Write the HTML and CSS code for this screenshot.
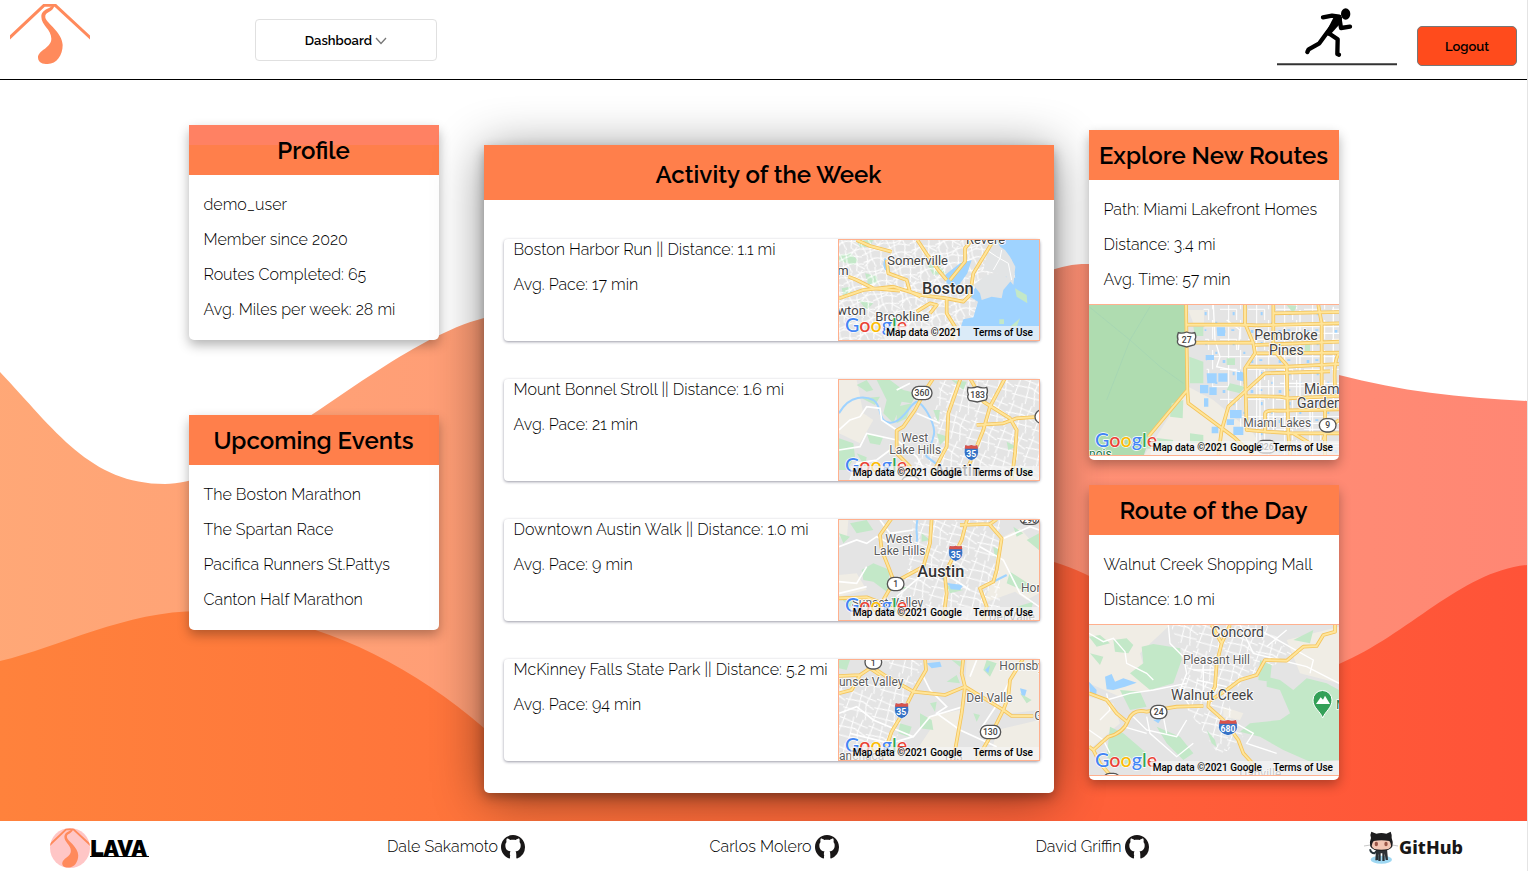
FILE: index.html
```html
<!DOCTYPE html>
<html lang="en">
<head>
<meta charset="utf-8">
<title>Lava</title>
<link rel="stylesheet" href="styles.css">
</head>
<body>
<svg class="defs" aria-hidden="true">
  <defs>
    <symbol id="volcano" viewBox="30 12 240 180">
      <path d="M26 116 132 16H166L274 116" fill="none" stroke="#ff8a5c" stroke-width="9"/>
      <path d="M160 12C156 27 125 24 124 50C124 76 154 87 154 116C154 144 114 150 114 173C115 188 128 192 143 192C170 192 188 166 188 135C187 96 140 70 136 53C133 34 158 40 164 16Z" fill="#ff8a5c"/>
    </symbol>
    <symbol id="mark" viewBox="0 0 16 16">
      <path fill="#191717" d="M8 0C3.58 0 0 3.58 0 8c0 3.54 2.29 6.53 5.47 7.59.4.07.55-.17.55-.38 0-.19-.01-.82-.01-1.490-.2-.9-.1-2.200.3-2.900-1.800-.2-3.400-1.200-3.400-3.900 0-.9.300-1.600.8-2.200-.1-.3-.3-1.200.1-2.300.6-.1 1.500.3 2.400.9.8-.2 2.500-.2 3.600 0 1-.6 1.800-1 2.400-.9.400 1.100.2 2 .1 2.300.5.6.8 1.300.8 2.200 0 2.700-1.600 3.700-3.400 3.900.4.700.5 1.500.5 2.900 0 .6-.01 1.100-.01 1.490 0 .21.15.46.55.38A8.010 8.010 0 0 0 16 8c0-4.420-3.580-8-8-8z"/>
      <path d="M3 11.700Q3.900 12 4.300 12.900 4.900 13.800 6.100 13.500" fill="none" stroke="#191717" stroke-width=".8"/>
    </symbol>
    <pattern id="streets" width="90" height="84" patternUnits="userSpaceOnUse" patternTransform="rotate(18)">
      <path class="lane" d="M0 12 90 20M0 40 52 33 90 46M0 66 90 60M14 0 8 84M40 0 48 84M70 0 64 40 76 84"/>
    </pattern>
    <pattern id="dense" width="74" height="70" patternUnits="userSpaceOnUse" patternTransform="rotate(-14)">
      <path class="lane" d="M0 8 30 14 74 6M0 28 40 20 74 32M0 50 36 44 74 54M8 0 16 34 6 70M30 0 26 38 34 70M52 0 60 26 48 70M0 62 26 44M40 20 66 0M52 50 74 70"/>
    </pattern>
    <pattern id="blocks" width="84" height="90" patternUnits="userSpaceOnUse">
      <path class="lane" d="M0 20H84M0 58H50M26 0V90M62 0V58M50 58V90"/>
      <path fill="#9fd3ff" d="M8 30h8v9h-8zM38 66h6v10h-6zM70 5h6v7h-6zM34 28h9v5h-9z"/>
    </pattern>
    <symbol id="interstate" viewBox="0 0 48 50" preserveAspectRatio="none">
      <path d="M6 2Q14 6 24 2 34 6 42 2 50 28 40 39 33 47 24 49 15 47 8 39-2 28 6 2Z" fill="#3572c6" stroke="#fff" stroke-width="2"/>
      <path d="M6 2Q14 6 24 2 34 6 42 2L44 13H4Z" fill="#d9534a"/>
    </symbol>
    <g id="legal">
      <g class="google"><text x="45" y="305"><tspan fill="#4285f4">G</tspan><tspan fill="#ea4335">o</tspan><tspan fill="#fbbc05">o</tspan><tspan fill="#4285f4">g</tspan><tspan fill="#34a853">l</tspan><tspan fill="#ea4335">e</tspan></text></g>
    </g>
  </defs>
</svg>

<div class="page">
  <header class="topbar">
    <a class="home" href="#" aria-label="Lava home"><svg width="80" height="60"><use href="#volcano"/></svg></a>
    <button class="menu" type="button">Dashboard
      <svg width="12" height="8" viewBox="0 0 12 8"><path d="M1 1 6 6.500 11 1" fill="none" stroke="#777" stroke-width="1.300"/></svg>
    </button>
    <svg class="runner" width="120" height="62" viewBox="81 12 360 186" role="img" aria-label="Runner">
      <g fill="none" stroke="#000" stroke-width="13" stroke-linecap="round" stroke-linejoin="round">
        <path d="M219 52 246 47 268 50 232 97 208 130 176 148 172 156"/>
        <path d="M268 52 273 84 300 80M234 98 263 118 262 162 267 164"/>
      </g>
      <path d="M254 46 276 52 275 66 238 107 224 104Z"/>
      <ellipse cx="287" cy="42" rx="14" ry="17"/>
      <path d="M81 193H441" stroke="#333" stroke-width="6"/>
    </svg>
    <button class="logout" type="button">Logout</button>
  </header>

  <main class="board">
    <svg class="waves" viewBox="0 80 1527 741" preserveAspectRatio="none" aria-hidden="true">
      <defs>
        <linearGradient id="lava" gradientUnits="userSpaceOnUse" x1="0" y1="0" x2="1527" y2="0">
          <stop offset="0" stop-color="#ff823c"/><stop offset="1" stop-color="#ff5338"/>
        </linearGradient>
      </defs>
      <path fill="url(#lava)" opacity=".7" d="M0 372C55 430 90 484 165 484 250 484 380 345 484 318 620 270 760 500 880 430 960 370 1000 262 1089 264 1180 275 1240 345 1339 375 1400 391 1460 398 1527 401V821H0Z"/>
      <path fill="url(#lava)" d="M0 661C60 647 125 611 200 611 300 611 400 655 484 728 620 800 740 790 830 700 910 610 980 540 1054 562 1160 595 1230 700 1339 664 1410 634 1460 572 1527 565V821H0Z"/>
    </svg>

    <div class="column left">
      <section class="card">
        <h2 class="title two-tone">Profile</h2>
        <div class="lines"><p>demo_user</p><p>Member since 2020</p><p>Routes Completed: 65</p><p>Avg. Miles per week: 28 mi</p></div>
      </section>
      <section class="card">
        <h2 class="title">Upcoming Events</h2>
        <div class="lines"><p>The Boston Marathon</p><p>The Spartan Race</p><p>Pacifica Runners St.Pattys</p><p>Canton Half Marathon</p></div>
      </section>
    </div>

    <section class="card week">
      <h2 class="title">Activity of the Week</h2>
      <div class="runs">
        <article class="run">
          <div class="facts"><p>Boston Harbor Run || Distance: 1.1 mi</p><p>Avg. Pace: 17 min</p></div>
          <svg class="map" viewBox="27 30 600 300" preserveAspectRatio="xMidYMid slice">
            <path class="land" d="M0 0H700V400H0Z"/>
            <path class="green" d="M27 75 62 70 85 92 70 105 27 92ZM80 32 130 30 118 50 90 52ZM105 130 140 138 145 160 115 165ZM35 175 60 170 65 190 40 195ZM290 100 330 110 350 130 310 135ZM85 210 130 220 110 240Z"/>
            <path fill="url(#dense)" d="M0 0H700V400H0Z"/>
            <path class="water" d="M500 30H630V330H380L400 268 430 262 444 215 420 200 440 165 480 140 520 130 556 145 545 90 520 70Z"/>
            <path class="water" d="M345 135 390 100 425 90 412 130 380 175 350 160ZM165 82Q150 120 180 128L180 110Z"/>
            <path fill="#e2e4e5" d="M430 165 470 135 510 130 545 150 520 180 515 205 485 200 455 210 450 190ZM480 30 525 60 540 80 556 110 550 165 530 140 500 130 460 120Z"/>
            <path class="lane" d="M470 60 500 80 535 100M490 120 510 85 515 60M535 100 545 150"/>
            <path class="green" d="M555 175 590 195 592 220 560 200ZM508 268H522V282H508ZM540 290 570 265 560 290Z"/>
            <g class="case"><path id="m1" d="M80 30 120 48 185 65M262 30 290 72 325 120 350 150M27 205 100 180 190 170 270 195 350 205 400 215 420 195 430 130 485 40M360 150 405 95 405 55 425 30M170 90 175 130 230 150 240 185 272 200M350 205 350 250 375 290 365 330M55 140 80 150 130 175 210 182M260 245 300 220 320 225 300 250"/></g>
            <use class="core" href="#m1"/>
            <g class="place"><text x="172" y="104">Somerville</text><text x="136" y="272">Brookline</text><text x="22" y="136">m</text><text x="22" y="254">wton</text><text x="408" y="42">Revere</text><text class="city" x="276" y="191">Boston</text></g>
            <use href="#legal"/><path class="veil" d="M165 288H627V330H165Z"/><text class="fine" x="169" y="317">Map data ©2021</text><text class="fine" x="430" y="317">Terms of Use</text>
          </svg>
        </article>
        <article class="run">
          <div class="facts"><p>Mount Bonnel Stroll || Distance: 1.6 mi</p><p>Avg. Pace: 21 min</p></div>
          <svg class="map" viewBox="27 30 600 300" preserveAspectRatio="xMidYMid slice">
            <path class="land" d="M0 0H700V400H0Z"/><path class="sand" d="M27 30H80L100 130 130 150 90 220 27 190Z"/>
            <path fill="url(#streets)" d="M330 30H630V330H210L300 220Z"/>
            <path class="green" d="M80 45 110 30 130 60 110 65ZM140 30H180L220 60 260 70 245 100 215 95 190 160 160 130 170 90ZM95 85 150 80 135 105ZM200 110 245 100 230 145 200 160ZM27 205 70 220 75 260 50 300H27ZM110 190 160 200 150 225 120 220ZM310 120 330 120 325 160ZM320 190 355 200 330 225ZM365 30 410 35 400 60ZM530 215 560 230 535 240ZM570 290 610 300 590 325ZM80 250 110 262 105 290Z"/>
            <path class="river" d="M27 130C60 70 110 80 130 90 160 110 140 155 180 158 220 160 245 90 265 95 295 120 320 175 310 200 300 250 280 230 290 260L330 290"/>
            <path class="white" d="M27 180 60 150 90 140 110 110 150 115 155 150 200 180M27 240 90 230 110 190 200 210 260 260 300 330M60 330 80 280 140 270 180 240M260 130 330 160M200 60 240 40"/>
            <g class="case"><path id="m2" d="M310 25 290 55 255 120 220 170 200 182 200 250 240 290 250 330M392 25 355 130 350 230 305 315M525 25 480 110 460 180 440 230 415 290M420 25 460 95 540 145 560 180 555 250 545 330M440 165 520 160 560 145 630 140"/></g><use class="core" href="#m2"/>
            <g class="badge"><rect x="246" y="49" width="60" height="40" rx="20"/><path d="M414 52Q428 56 442 50 456 56 470 52 475 64 470 74 474 82 468 90L442 96 418 91Q410 82 415 74 410 64 414 52Z"/><rect x="615" y="120" width="50" height="40" rx="20"/><rect x="215" y="318" width="54" height="40" rx="20"/></g>
            <use href="#interstate" x="400" y="223" width="48" height="50"/>
            <g class="shield"><text x="276" y="79">360</text><text x="443" y="83">183</text><text class="light" x="424" y="262">35</text></g>
            <g class="place small"><text x="214" y="216">West</text><text x="178" y="252">Lake Hills</text><text class="city" x="312" y="317">Austin</text></g>
            <use href="#legal"/><path class="veil" d="M62 288H627V330H62Z"/><text class="fine" x="68" y="317">Map data ©2021 Google</text><text class="fine" x="430" y="317">Terms of Use</text>
          </svg>
        </article>
        <article class="run">
          <div class="facts"><p>Downtown Austin Walk || Distance: 1.0 mi</p><p>Avg. Pace: 9 min</p></div>
          <svg class="map" viewBox="27 30 600 300" preserveAspectRatio="xMidYMid slice">
            <path class="land" d="M0 0H700V400H0Z"/><path class="sand" d="M27 30H55L50 90 27 80ZM27 195 80 190 110 240 27 260ZM520 80 570 55 627 120V250L590 270 555 245 460 280 500 180Z"/>
            <path fill="url(#streets)" d="M250 30H510V330H180L230 200Z"/>
            <path class="green" d="M60 40 110 30 130 60 80 70ZM27 70 60 80 40 100ZM95 180 130 160 180 180 175 215 240 235 170 245 130 215 100 210ZM275 70 300 90 275 95ZM27 260 80 270 60 290ZM490 110 510 120 495 145ZM550 50 580 70 560 80ZM540 185 610 230 600 250 530 220ZM590 90 627 70V120ZM350 225 400 240 360 250ZM560 290 610 275 600 310Z"/>
            <path class="river" d="M262 30C255 70 265 75 260 95M330 190 350 220 390 235M470 225Q500 210 530 195"/><path class="water" d="M355 220 400 225 390 240 362 238Z"/>
            <path class="white" d="M27 110 80 90 110 100 140 80 180 100M110 170 80 220 27 215M150 30 180 70 250 60M200 260 270 200 330 180 420 240M27 250 110 230M450 110 520 150 570 250 627 290M510 90 600 50 627 60"/>
            <g class="case"><path id="m3" d="M185 25 150 75 155 120 175 170 190 210M305 25 300 100 280 170 215 205 180 235 160 270 140 330M27 265 110 262 170 285 240 330M412 25 395 90 355 170 345 200 350 250 340 330M390 45 480 42 500 28M480 45 515 85 500 180 490 215 450 235 470 290 460 330"/></g><use class="core" href="#m3"/>
            <g class="badge"><rect x="172" y="202" width="50" height="40" rx="20"/><rect x="570" y="5" width="58" height="38" rx="19"/></g>
            <use href="#interstate" x="353" y="105" width="48" height="50"/>
            <g class="shield"><text x="197" y="232">1</text><text x="599" y="38">290</text><text class="light" x="377" y="144">35</text></g>
            <g class="place small"><text x="166" y="99">West</text><text x="131" y="135">Lake Hills</text><text class="city" x="262" y="201">Austin</text><text x="573" y="247">Hornsby</text><text x="65" y="292">Sunset Valley</text><text x="476" y="334">Del Valle</text></g>
            <use href="#legal"/><path class="veil" d="M62 291H627V330H62Z"/><text class="fine" x="68" y="317">Map data ©2021 Google</text><text class="fine" x="430" y="317">Terms of Use</text>
          </svg>
        </article>
        <article class="run">
          <div class="facts"><p>McKinney Falls State Park || Distance: 5.2 mi</p><p>Avg. Pace: 94 min</p></div>
          <svg class="map" viewBox="27 30 600 300" preserveAspectRatio="xMidYMid slice">
            <path class="land" d="M0 0H700V400H0Z"/><path class="sand" d="M410 30H627V180L540 190 405 110ZM290 200 390 180 380 330H240L300 240ZM500 240 627 210V330H480Z"/>
            <path fill="url(#streets)" d="M27 100H250L190 300 27 330ZM150 30H280L250 120Z"/>
            <path class="green" d="M27 30H60L50 60 27 55ZM300 160 320 155 315 185ZM350 95 380 75 390 100ZM270 190 305 210 310 240 270 235ZM210 220 245 230 235 260 205 250ZM365 30 400 35 390 50ZM470 30 500 40 480 80 460 60ZM570 130 605 150 590 160ZM430 190 450 195 440 215Z"/>
            <path class="water" d="M290 40 330 35 335 50 305 55ZM570 115 590 120 585 138 575 135ZM465 60 480 45 475 70Z"/>
            <path class="white" d="M27 190 80 170 130 210 250 260 300 200 400 170M60 250 180 280 250 260M280 80 300 120 350 170 320 190 390 240 500 290M440 30 420 80M540 90 510 150 450 240"/>
            <g class="case"><path id="m4" d="M27 78 90 75 120 55 150 75M140 60 170 80 250 125 345 135 405 110 520 180 545 198 610 198M285 25 288 60 250 125 215 195 185 245 155 330M400 25 395 70 405 110 395 190 370 330M580 25 540 90 535 140 520 180 475 270 440 330M27 130 65 120 90 75"/></g><use class="core" href="#m4"/>
            <g class="badge"><rect x="105" y="17" width="50" height="40" rx="20"/><rect x="451" y="226" width="61" height="40" rx="20"/></g>
            <use href="#interstate" x="191" y="157" width="48" height="50"/>
            <g class="shield"><text x="130" y="47">1</text><text x="481" y="256">130</text><text class="light" x="214" y="196">35</text></g>
            <g class="place small"><text x="508" y="60">Hornsby</text><text x="27" y="108">unset Valley</text><text x="409" y="156">Del Valle</text><text x="613" y="209">G</text><text x="27" y="329">anchaca</text><text x="338" y="332">183</text></g>
            <use href="#legal"/><path class="veil" d="M62 291H627V330H62Z"/><text class="fine" x="68" y="317">Map data ©2021 Google</text><text class="fine" x="430" y="317">Terms of Use</text>
          </svg>
        </article>
      </div>
    </section>

    <div class="column right">
      <section class="card">
        <h2 class="title">Explore New Routes</h2>
        <div class="lines tight"><p>Path: Miami Lakefront Homes</p><p>Distance: 3.4 mi</p><p>Avg. Time: 57 min</p></div>
        <svg class="map wide" viewBox="27 45 750 450" preserveAspectRatio="xMidYMid slice">
          <path class="land" d="M0 0H800V500H0Z"/><path class="sand" d="M325 60H372V100H340ZM325 290 400 330 520 430 560 500H190Z"/>
          <path fill="url(#blocks)" d="M370 45H780V500H560L410 330 380 240Z"/>
          <path d="M27 45H315V90L322 300 210 440 190 500H27Z" fill="#afdcb0"/>
          <path d="M27 50 150 150 240 230 310 280M210 50 150 150 80 330" fill="none" stroke="#a3d3b4" stroke-width="2"/>
          <path class="green" d="M340 110H370V138H345ZM328 200 370 215V280H330ZM275 340 310 330 308 385 270 380ZM450 280 495 290 480 310 440 300ZM330 430 370 435V460H330ZM620 45 650 48 640 70ZM440 205H465V225H440ZM200 440 280 450 270 480 190 475ZM675 160H690V185H675Z"/>
          <path class="water" d="M410 112H435V138H412ZM377 195H402V210H377ZM380 250H410V280H382ZM360 285H385V310H360ZM415 250H442V275H415ZM388 292H410V315H388ZM450 360H485V385H450ZM470 240 495 250V275L470 270ZM460 410H490V435H460ZM440 388H462V405H440ZM395 410H415V430H395ZM372 325H385V350H372Z"/>
          <path class="white thin" d="M400 45 405 150 420 200 410 230 480 245M440 90 480 120 475 180M540 240V490M580 260V420M660 60V320M760 50V330M530 130H777M600 280H777M640 400H777M500 460H777M690 330V480"/>
          <g class="case"><path id="m5" d="M318 45 322 300 205 440M322 300 325 340 460 440 520 495M318 104H480L530 106 777 100M322 158H520M495 45V100L520 160 525 190 495 235 500 420 560 425 640 430 777 430M580 45V180L620 225 625 430 630 495M580 70 777 66M525 165 777 155M530 190 777 188M495 230H620L777 222M415 495 425 420 445 350 500 300 555 250 750 244M500 318 600 320 625 325 777 318M555 425V370Q560 360 590 362L777 358M715 45 725 100V290M777 190Q760 210 765 290M735 330V495M777 390 740 420 730 450M640 430 690 460"/></g><use class="core" href="#m5"/>
          <g class="badge"><path d="M295 128Q306 132 320 126 334 132 344 128 350 140 345 148 350 158 342 165L320 171 298 165Q289 158 294 148 290 140 295 128Z"/><rect x="718" y="386" width="50" height="40" rx="20"/><rect x="530" y="451" width="58" height="38" rx="19"/></g>
          <g class="shield"><text x="320" y="159">27</text><text x="743" y="415">9</text><text x="559" y="480">826</text></g>
          <g class="place"><text class="big" x="523" y="151">Pembroke</text><text class="big" x="567" y="194">Pines</text><text class="big" x="672" y="311">Miami</text><text class="big" x="651" y="354">Gardens</text></g><g class="place small"><text x="490" y="412">Miami Lakes</text><text x="27" y="503" fill="#25774a">nois</text></g>
          <use href="#legal" y="166"/><path class="veil" d="M212 453H777V495H212Z"/><text class="fine" x="218" y="482">Map data ©2021 Google</text><text class="fine" x="580" y="482">Terms of Use</text>
        </svg>
      </section>
      <section class="card">
        <h2 class="title">Route of the Day</h2>
        <div class="lines tight"><p>Walnut Creek Shopping Mall</p><p>Distance: 1.0 mi</p></div>
        <svg class="map wide" viewBox="27 45 750 450" preserveAspectRatio="xMidYMid slice">
          <path class="land" d="M0 0H800V500H0Z"/><path class="sand" d="M27 45H270L200 110 180 130 210 240 120 260 27 220ZM620 90 777 50V220L660 190ZM27 260 100 280 120 340 27 420ZM430 290 490 310 480 330 430 320Z"/>
          <path fill="url(#streets)" d="M270 45H560L640 140 500 200 440 270 490 380 420 440 290 250 320 150Z"/>
          <path class="green" d="M185 110 220 102 300 115 305 150 280 220 210 240 150 190 190 160ZM100 90 140 85 160 105 145 130 105 125ZM27 80 60 75 90 100 50 110ZM560 200 600 210 640 240 680 205 740 220 777 240V450L690 455 610 420 540 380 480 365 510 340 600 330 630 310 600 240 560 230ZM30 130 70 140 60 165ZM90 350 130 370 200 430 120 470 80 440ZM230 350 300 380 340 430 310 450 260 400ZM120 240 180 245 200 290 150 300ZM540 150 575 165 570 215 535 210ZM640 90 700 60 690 100ZM380 360 405 390 410 412 395 400Z"/>
          <path class="water" d="M75 200 95 192 105 215 130 205 170 218 135 230 100 240 80 238ZM27 215 50 240 48 260 30 245ZM220 330 245 325 235 340Z"/>
          <path class="white thin" d="M27 70 70 95 100 85 135 125 140 160 200 190 220 210M265 45 270 100 310 140 320 190 300 240 330 290M80 270 150 250 220 240 320 220M60 330 90 300 80 250M160 320 200 360 290 380 320 330M200 320 210 370 290 440 340 400M130 350 200 370M480 45 520 130 680 170 777 220M540 60 700 150 690 190M560 110 620 60M450 330 520 370 500 400 590 430M340 180H410M350 210 440 230M370 150V240M27 360 70 390 90 430M250 320 260 370"/>
          <g class="case"><path id="m6" d="M395 45 425 100 410 160 405 230 388 260 385 290 430 330 475 390 490 430 545 490M450 45 425 100M385 275 440 240 480 210 530 195 555 150 620 152 670 110 710 108 730 75 765 65 765 45M370 288 290 290 200 305Q160 295 145 330 130 370 85 380L40 420 27 410M27 250 80 270 110 310 140 335M40 420 60 460 90 495"/></g><use class="core" href="#m6"/>
          <g class="badge"><rect x="211" y="286" width="50" height="40" rx="20"/><rect x="70" y="490" width="50" height="38" rx="19"/></g><use href="#interstate" x="412" y="328" width="64" height="50"/>
          <g class="shield"><text x="236" y="315">24</text><text class="light" x="444" y="366">680</text></g>
          <path d="M728 324C720 302 699 294 699 270A28 28 0 0 1 756 270C756 294 737 302 728 324Z" fill="#34a058" stroke="#fff" stroke-width="3"/><path d="M708 282 722 262 729 269 735 257 750 282Z" fill="#fff"/>
          <g class="place"><text class="big" x="394" y="81">Concord</text><text class="big" x="273" y="269">Walnut Creek</text><text x="768" y="298" fill="#25774a">M</text></g><g class="place small"><text x="309" y="162">Pleasant Hill</text><text x="478" y="503">Danville</text></g>
          <use href="#legal" y="166"/><path class="veil" d="M212 453H777V495H212Z"/><text class="fine" x="218" y="482">Map data ©2021 Google</text><text class="fine" x="580" y="482">Terms of Use</text>
        </svg>
      </section>
    </div>
  </main>

  <footer class="foot">
    <a class="brand" href="#"><span class="disc"><svg width="40" height="40" viewBox="0 0 40 40"><use href="#volcano" x="-6" y="0" width="52" height="40"/></svg></span><b>LAVA</b></a>
    <a href="#">Dale Sakamoto <svg width="24" height="24"><use href="#mark"/></svg></a>
    <a href="#">Carlos Molero <svg width="24" height="24"><use href="#mark"/></svg></a>
    <a href="#">David Griffin <svg width="24" height="24"><use href="#mark"/></svg></a>
    <a class="hub" href="#">
      <svg width="34" height="34" viewBox="1077 56 102 102" aria-hidden="true">
        <ellipse cx="1129" cy="145" rx="32" ry="12" fill="#9dd7f2"/>
        <path d="M1117 146V117L1108 126Q1098 126 1095 114" fill="none" stroke="#27343b" stroke-width="6"/>
        <path d="M1113 112H1146L1149 146H1142L1139 126V149H1132V126H1127V149H1120V126L1117 147H1111Z" fill="#2b3035"/>
        <path d="M1099 61 1114 67Q1129 63 1144 67L1157 61Q1162 73 1160 80 1171 109 1149 116 1129 121 1109 116 1087 108 1098 80 1094 70 1099 61Z" fill="#1c1c1e"/>
        <path d="M1106 89Q1129 84 1153 89 1165 105 1150 113 1129 118 1108 113 1094 104 1106 89Z" fill="#f3c6b4"/>
        <ellipse cx="1114" cy="98" rx="5" ry="7" fill="#9a5547"/><ellipse cx="1143" cy="98" rx="5" ry="7" fill="#9a5547"/><path d="M1077 104 1096 101M1162 101 1179 104" stroke="#aaa" stroke-width="2"/>
      </svg><b>GitHub</b>
    </a>
  </footer>
</div>
</body>
</html>
```
FILE: styles.css
```css
* { box-sizing: border-box; }
body { margin: 0; background: #fff; color: #000; font: 300 16px/20px Raleway, Lato, sans-serif; }
h2, p { margin: 0; }
a { color: inherit; text-decoration: none; }
.defs { position: absolute; width: 0; height: 0; }
.page { min-height: 100vh; margin-right: 2px; border-right: 1px solid #e4e4e4; display: flex; flex-direction: column; }

.topbar { height: 80px; flex: none; display: flex; align-items: flex-start; padding: 0 10px; border-bottom: 1px solid #000; }
.home { margin-top: 4px; height: 60px; }
button { font: 600 13px/20px Raleway, Lato, sans-serif; color: #000; cursor: pointer; padding: 2px 6px 0; }
.menu { width: 182px; height: 42px; margin: 19px 0 0 165px; background: #fff; border: 1px solid #e0e0e0; border-radius: 4px; }
.runner { margin: 4px 20px 0 auto; }
.logout { width: 100px; height: 40px; margin-top: 26px; background: #ff4b1c; border: 1px solid #777; border-radius: 5px; }

.board { position: relative; flex: 1; display: grid; grid-template-columns: minmax(0, 260px) minmax(0, 570px) minmax(0, 250px); column-gap: 35px; justify-content: center; align-items: start; padding: 45px 0 28px; }
.waves { position: absolute; inset: 0; width: 100%; height: 100%; }
.column { position: relative; display: grid; }
.left { gap: 75px; padding-right: 10px; }
.right { gap: 25px; margin-top: 5px; }
.card { background: #fff; border-radius: 5px; box-shadow: 0 5px 12px rgba(0, 0, 0, .3); }
.title { height: 50px; display: flex; align-items: center; justify-content: center; padding-top: 1px; background: #ff7f4b; font-size: 24px; line-height: 30px; font-weight: 600; white-space: nowrap; }
.two-tone { background: linear-gradient(#ff8163 20px, #ff7f4b 20px); }
.lines { padding: 12px 15px 13px; line-height: 35px; white-space: nowrap; }
.tight { padding-bottom: 7px; }
.right .card { padding-bottom: 4px; }

.week { position: relative; margin-top: 20px; box-shadow: 0 6px 50px rgba(0, 0, 0, .45), 0 4px 12px rgba(0, 0, 0, .3); }
.week .title { height: 55px; padding-top: 4px; }
.runs { display: grid; gap: 38px; padding: 39px 14px 32px 20px; }
.run { display: flex; justify-content: space-between; border-radius: 4px; box-shadow: 0 1px 3px rgba(30, 30, 60, .45); }
.facts { display: grid; gap: 15px; align-content: start; padding: 1px 0 0 10px; white-space: nowrap; }
.map { display: block; flex: none; width: 202px; height: 102px; border: 1px solid #ffb08e; }
.wide { width: 100%; height: 152px; border-width: 1px 0; }

.land { fill: #e4e4e4; }
.sand { fill: #f0ede5; }
.green { fill: #c3e8c8; }
.water { fill: #9fd3ff; }
.river { fill: none; stroke: #9fd3ff; stroke-width: 6; }
.white { fill: none; stroke: #fff; stroke-width: 5; }
.thin { stroke-width: 4; }
.lane { fill: none; stroke: #fff; stroke-width: 3; }
.case { fill: none; stroke: #f4c45c; stroke-width: 11; stroke-linejoin: round; }
.core { fill: none; stroke: #ffe59a; stroke-width: 6; }
.case path { stroke-width: inherit; }
.place { font: 400 39px Roboto, sans-serif; fill: #444; stroke: #fff; stroke-width: 5; paint-order: stroke; stroke-linejoin: round; }
.small { font-size: 36px; fill: #5c5c5c; }
.place .city { font-size: 49px; font-weight: 500; fill: #333; }
.place .big { font-size: 42px; }
.badge { fill: #fff; stroke: #555; stroke-width: 4; }
.shield { font: 500 26px Roboto, sans-serif; fill: #444; text-anchor: middle; }
.light { fill: #fff; font-weight: 700; }
.google { font: 500 59px Lato, sans-serif; stroke: #fff; stroke-width: 4; paint-order: stroke; }
.veil { fill: #f5f5f5; opacity: .7; }
.fine { font: 500 30px Roboto, sans-serif; fill: #000; }

.foot { position: relative; height: 50px; flex: none; display: grid; grid-template-columns: 297fr 318fr 318fr 318fr 276fr; align-items: center; padding-top: 2px; background: #fff; }
.foot a { display: flex; align-items: center; justify-content: center; gap: 3px; }
.foot .brand { justify-content: flex-start; padding: 2px 0 0 50px; gap: 0; }
.disc { width: 40px; height: 40px; border-radius: 50%; overflow: hidden; background: #ffc6c6; }
.disc svg { display: block; }
.brand b { font: 900 23px/17px Raleway, Lato, sans-serif; border-bottom: 1px solid #000; padding-right: 2px; }
.foot .hub { justify-content: flex-end; padding-right: 64px; gap: 1px; }
.hub b { font: 800 18px/20px "Noto Sans", sans-serif; color: #191717; }
```
